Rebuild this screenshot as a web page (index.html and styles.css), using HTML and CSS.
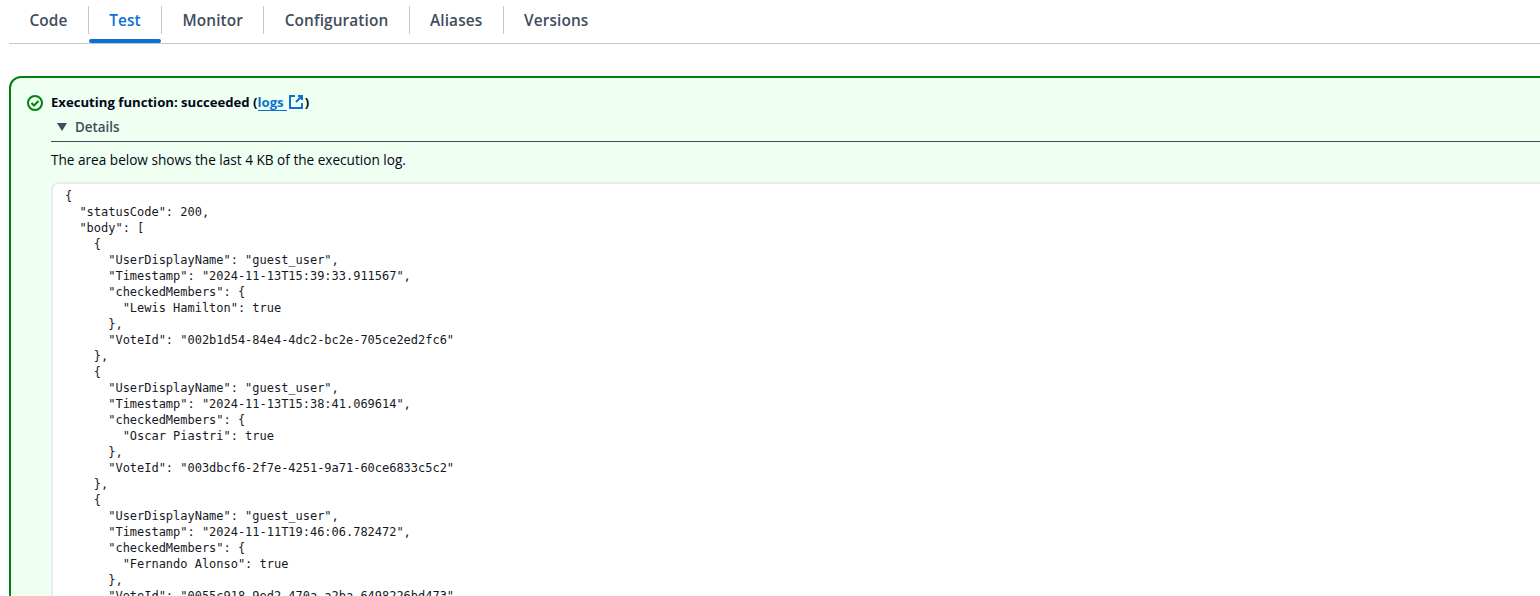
FILE: index.html
```html
<!DOCTYPE html>
<html lang="en">
<head>
<meta charset="utf-8">
<title>Lambda test</title>
<link rel="stylesheet" href="styles.css">
</head>
<body>
<nav class="tabs">
  <a class="tab">Code</a>
  <a class="tab active">Test</a>
  <a class="tab">Monitor</a>
  <a class="tab">Configuration</a>
  <a class="tab">Aliases</a>
  <a class="tab">Versions</a>
</nav>
<section class="alert">
  <svg class="status-icon" width="16" height="16" viewBox="0 0 16 16" fill="none"><circle cx="8" cy="8" r="7" stroke="#037f0c" stroke-width="2"/><path d="M4.5 8l2.5 2.5 4.5-4.5" stroke="#037f0c" stroke-width="2"/></svg>
  <div class="alert-body">
    <h2 class="alert-title">Executing function: succeeded (<a class="logs">logs</a><svg class="ext" width="16" height="16" viewBox="0 0 16 16" fill="none"><path d="M7 2H2v12h12V9M10 2h4v4M14 2L8 8" stroke="#0972d3" stroke-width="2"/></svg>)</h2>
    <div class="details-head"><svg width="10" height="8" viewBox="0 0 10 8"><path d="M0 0h10L5 8z" fill="#414d5c"/></svg><span>Details</span></div>
    <p class="note">The area below shows the last 4 KB of the execution log.</p>
    <pre class="log">{
  "statusCode": 200,
  "body": [
    {
      "UserDisplayName": "guest_user",
      "Timestamp": "2024-11-13T15:39:33.911567",
      "checkedMembers": {
        "Lewis Hamilton": true
      },
      "VoteId": "002b1d54-84e4-4dc2-bc2e-705ce2ed2fc6"
    },
    {
      "UserDisplayName": "guest_user",
      "Timestamp": "2024-11-13T15:38:41.069614",
      "checkedMembers": {
        "Oscar Piastri": true
      },
      "VoteId": "003dbcf6-2f7e-4251-9a71-60ce6833c5c2"
    },
    {
      "UserDisplayName": "guest_user",
      "Timestamp": "2024-11-11T19:46:06.782472",
      "checkedMembers": {
        "Fernando Alonso": true
      },
      "VoteId": "0055c918-9ed2-470a-a2ba-6498226bd473"</pre>
  </div>
</section>
</body>
</html>
```
FILE: styles.css
```css
html, body { margin: 0; height: 596px; overflow: hidden; background: #fff; }
body { font-family: "Open Sans", "Noto Sans", sans-serif; color: #000716; }
.tabs { display: flex; margin: 0 0 32px 9px; height: 44px; box-sizing: border-box; border-bottom: 1px solid #c6c6cd; align-items: flex-start; }
.tab { position: relative; height: 28px; box-sizing: border-box; margin-top: 6px; padding: 1px 20.4px 0; border-right: 1px solid #c6c6cd; font-size: 15.4px; letter-spacing: 0.1px; line-height: 28px; font-weight: 600; color: #414d5c; white-space: nowrap; }
.tab:last-child { border-right: 0; }
.tab.active { color: #0972d3; }
.tab.active::after { content: ""; position: absolute; left: 0; right: 0; bottom: -9px; height: 4px; border-radius: 2px; background: #0972d3; }
.alert { display: flex; width: 1600px; height: 560px; box-sizing: border-box; margin-left: 9px; padding: 17px 0 0 16px; gap: 8px; background: #effff1; border: 2px solid #037f0c; border-radius: 12px; }
.status-icon { flex: none; }
.alert-body { flex: 1; min-width: 0; }
.alert-title { display: flex; align-items: flex-start; margin: 0; height: 16px; font-size: 13.15px; line-height: 14px; font-weight: 700; }
.logs { color: #0972d3; border-bottom: 1px solid #0972d3; padding: 0 3px 1px 0; }
.ext { margin: -1px 1px 0; }
.details-head { display: flex; align-items: center; gap: 8px; height: 31px; box-sizing: border-box; padding: 1px 0 0 6px; border-bottom: 1px solid #414d5c; font-size: 13.4px; font-weight: 600; color: #414d5c; }
.note { margin: 10px 0 14px; font-size: 13.6px; line-height: 16px; }
.log { margin: 0; padding: 4px 12px; height: 500px; box-sizing: border-box; background: #fff; border: 2px solid #e9ebed; border-radius: 8px; font-family: "DejaVu Sans Mono", monospace; font-size: 12px; letter-spacing: -0.02px; line-height: 16px; color: #16191f; }
```
